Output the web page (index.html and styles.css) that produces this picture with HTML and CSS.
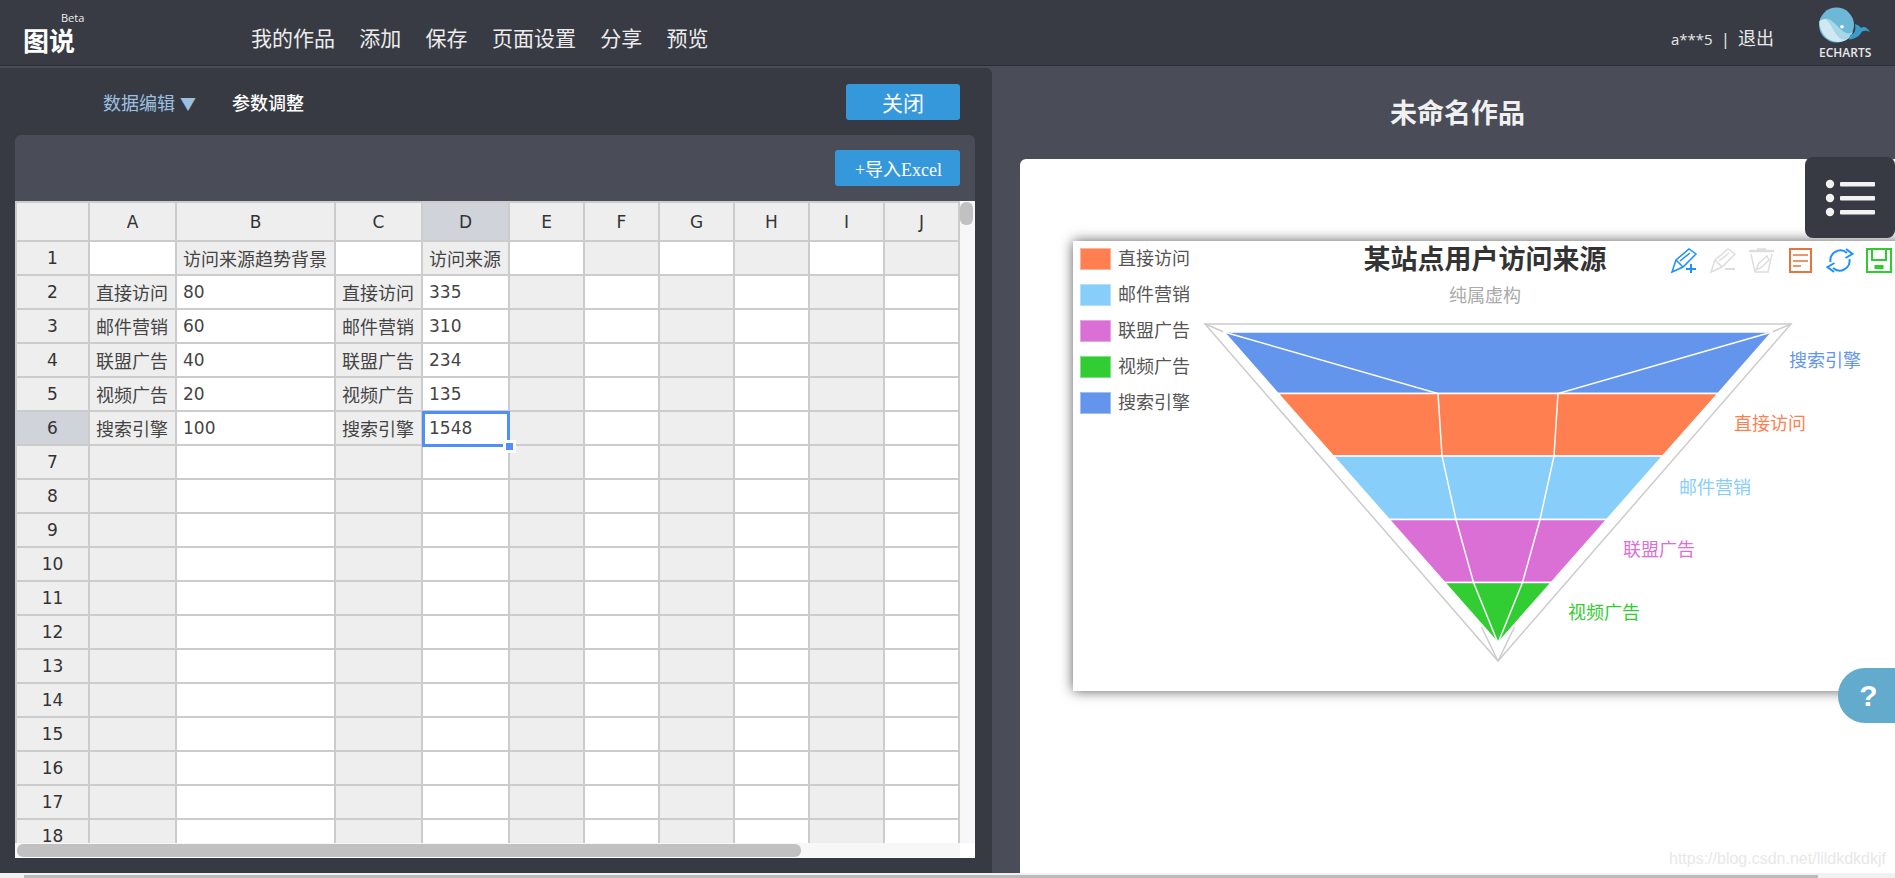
FILE: index.html
```html
<!DOCTYPE html>
<html lang="en">
<head>
    <meta charset="UTF-8">
    <meta name="viewport" content="width=device-width, initial-scale=1.0">
    <title>图说</title>
    <link rel="stylesheet" href="styles.css">
</head>
<body>

<div class="topbar">
    <div class="brand">
        <span class="beta">Beta</span>
        <span class="brand-name">图说</span>
    </div>
    <nav class="nav">
        <a>我的作品</a>
        <a>添加</a>
        <a>保存</a>
        <a>页面设置</a>
        <a>分享</a>
        <a>预览</a>
    </nav>
    <div class="user"><span class="user-name">a***5</span><span class="sep">|</span>退出</div>
    <div class="echarts-logo">
        <svg width="52" height="38" viewBox="0 0 52 38">
            <circle cx="17.5" cy="19" r="17.5" fill="#6cb8d6"/>
            <path d="M0.5 15C5 11 12 13 16 19C20 26 27 31 32 30C27 36 18 38 10 33.5C4 30 0 22 0.5 15Z" fill="#d0e8f1"/>
            <path d="M6 12.5C13 12 19 22 25 26C29 28 32 28 34 25C32 32 27 35 22 33C16 30 13 18 6 12.5Z" fill="#a8d6e6"/>
            <path d="M31 29C36 28 37 24 36 18C40 19 41 21 42 22C45 20 48 21 51 26C47 24 45 25 43 25.500C41 30 36 33 30 33.500Z" fill="#3b9cc8"/>
            <circle cx="23" cy="20.700" r="1.800" fill="#fff"/>
        </svg>
        <span>ECHARTS</span>
    </div>
</div>

<div class="main">
    <div class="editor">
        <div class="editor-tabs">
            <a class="tab tab-active">数据编辑<span class="arrow">▼</span></a>
            <a class="tab tab-plain">参数调整</a>
            <button class="btn btn-close">关闭</button>
        </div>
        <div class="sheet-panel">
            <div class="sheet-head">
                <button class="btn btn-import">+导入Excel</button>
            </div>
            <div class="sheet-body">
                <div class="sheet-view">
                    <table class="sheet">
                        <colgroup>
                            <col class="col-head"><col class="col-a"><col class="col-b"><col class="col-a"><col class="col-a">
                            <col class="col-n"><col class="col-n"><col class="col-n"><col class="col-n"><col class="col-n"><col class="col-n">
                        </colgroup>
                        <thead>
                            <tr><th></th><th>A</th><th>B</th><th>C</th><th class="on">D</th><th>E</th><th>F</th><th>G</th><th>H</th><th>I</th><th>J</th></tr>
                        </thead>
                        <tbody>
                            <tr><th>1</th><td></td><td>访问来源趋势背景</td><td></td><td>访问来源</td><td></td><td></td><td></td><td></td><td></td><td></td></tr>
                            <tr><th>2</th><td>直接访问</td><td class="num">80</td><td>直接访问</td><td class="num">335</td><td></td><td></td><td></td><td></td><td></td><td></td></tr>
                            <tr><th>3</th><td>邮件营销</td><td class="num">60</td><td>邮件营销</td><td class="num">310</td><td></td><td></td><td></td><td></td><td></td><td></td></tr>
                            <tr><th>4</th><td>联盟广告</td><td class="num">40</td><td>联盟广告</td><td class="num">234</td><td></td><td></td><td></td><td></td><td></td><td></td></tr>
                            <tr><th>5</th><td>视频广告</td><td class="num">20</td><td>视频广告</td><td class="num">135</td><td></td><td></td><td></td><td></td><td></td><td></td></tr>
                            <tr><th class="on">6</th><td>搜索引擎</td><td class="num">100</td><td>搜索引擎</td><td class="num sel">1548</td><td></td><td></td><td></td><td></td><td></td><td></td></tr>
                            <tr><th>7</th><td></td><td></td><td></td><td></td><td></td><td></td><td></td><td></td><td></td><td></td></tr>
                            <tr><th>8</th><td></td><td></td><td></td><td></td><td></td><td></td><td></td><td></td><td></td><td></td></tr>
                            <tr><th>9</th><td></td><td></td><td></td><td></td><td></td><td></td><td></td><td></td><td></td><td></td></tr>
                            <tr><th>10</th><td></td><td></td><td></td><td></td><td></td><td></td><td></td><td></td><td></td><td></td></tr>
                            <tr><th>11</th><td></td><td></td><td></td><td></td><td></td><td></td><td></td><td></td><td></td><td></td></tr>
                            <tr><th>12</th><td></td><td></td><td></td><td></td><td></td><td></td><td></td><td></td><td></td><td></td></tr>
                            <tr><th>13</th><td></td><td></td><td></td><td></td><td></td><td></td><td></td><td></td><td></td><td></td></tr>
                            <tr><th>14</th><td></td><td></td><td></td><td></td><td></td><td></td><td></td><td></td><td></td><td></td></tr>
                            <tr><th>15</th><td></td><td></td><td></td><td></td><td></td><td></td><td></td><td></td><td></td><td></td></tr>
                            <tr><th>16</th><td></td><td></td><td></td><td></td><td></td><td></td><td></td><td></td><td></td><td></td></tr>
                            <tr><th>17</th><td></td><td></td><td></td><td></td><td></td><td></td><td></td><td></td><td></td><td></td></tr>
                            <tr><th>18</th><td></td><td></td><td></td><td></td><td></td><td></td><td></td><td></td><td></td><td></td></tr>
                        </tbody>
                    </table>
                    <div class="vscroll"><div class="vthumb"></div></div>
                </div>
                <div class="hscroll-row">
                    <div class="hscroll"><div class="hthumb"></div></div>
                </div>
            </div>
        </div>
    </div>

    <div class="stage">
        <h1 class="stage-title">未命名作品</h1>
        <div class="card">
            <div class="chart">
                <!-- viewBox uses page coordinates so the funnel numbers are easy to check -->
                <svg class="chart-svg" width="852" height="450" viewBox="1073 241 852 450">
                    <!-- legend -->
                    <rect class="sw" x="1080.5" y="248.5" width="30" height="21" fill="#ff7f50" stroke="#ffb39a"/>
                    <rect class="sw" x="1080.5" y="284.5" width="30" height="21" fill="#87cefa" stroke="#b5e0fc"/>
                    <rect class="sw" x="1080.5" y="320.5" width="30" height="21" fill="#da70d6" stroke="#e8a5e5"/>
                    <rect class="sw" x="1080.5" y="356.5" width="30" height="21" fill="#32cd32" stroke="#82e182"/>
                    <rect class="sw" x="1080.5" y="392.5" width="30" height="21" fill="#6495ed" stroke="#a2bff4"/>
                    <text class="legend" x="1118" y="265">直接访问</text>
                    <text class="legend" x="1118" y="301">邮件营销</text>
                    <text class="legend" x="1118" y="337">联盟广告</text>
                    <text class="legend" x="1118" y="373">视频广告</text>
                    <text class="legend" x="1118" y="409">搜索引擎</text>

                    <text class="chart-title" x="1485" y="269">某站点用户访问来源</text>
                    <text class="chart-sub" x="1485" y="302">纯属虚构</text>

                    <!-- gray outer funnel -->
                    <g class="outer">
                        <path d="M1205 324H1791L1498 661Z"/>
                        <path d="M1205 324L1224 332M1791 324L1772 332M1498 661L1481.5 627M1498 661L1514.5 627"/>
                    </g>

                    <!-- funnel -->
                    <g class="bands">
                        <polygon points="1224,332 1772,332 1718,393.5 1278,393.5" fill="#6495ed"/>
                        <polygon points="1278,393.5 1718,393.5 1662.7,456 1333.3,456" fill="#ff7f50"/>
                        <polygon points="1333.3,456 1662.7,456 1606.8,519.5 1389.2,519.5" fill="#87cefa"/>
                        <polygon points="1389.2,519.5 1606.8,519.5 1551.3,582.5 1444.7,582.5" fill="#da70d6"/>
                        <polygon points="1444.7,582.5 1551.3,582.5 1498,643" fill="#32cd32"/>
                    </g>
                    <path class="inner" d="M1224 332L1438 393.5L1442 456L1456 519.5L1473.5 582.5L1498 643L1522.5 582.5L1540 519.5L1554 456L1558 393.5L1772 332"/>

                    <text class="label" x="1789" y="367" fill="#6495ed">搜索引擎</text>
                    <text class="label" x="1734" y="430" fill="#ff7f50">直接访问</text>
                    <text class="label" x="1679" y="494" fill="#87cefa">邮件营销</text>
                    <text class="label" x="1623" y="556" fill="#da70d6">联盟广告</text>
                    <text class="label" x="1568" y="619" fill="#32cd32">视频广告</text>

                    <!-- toolbox -->
                    <g class="tool" stroke="#1e90ff" transform="translate(1671 248)">
                        <path d="M1 24L5 12L18 1L25 6L12 19ZM5 12L12 19M9 13L19 5"/>
                        <path d="M15 21H25M20 16V25" stroke-width="2"/>
                    </g>
                    <g class="tool" stroke="#dddddd" transform="translate(1710 248)">
                        <path d="M1 24L5 12L18 1L25 6L12 19ZM5 12L12 19M9 13L19 5"/>
                        <path d="M15 21H25" stroke-width="2"/>
                    </g>
                    <g class="tool" stroke="#dddddd" transform="translate(1749 248)">
                        <path d="M0 3H25M8 1.5H17" stroke-width="2.5"/>
                        <path d="M2 6L6 24H19L23 6M7 22L10 15L18 8L20 12L13 19Z"/>
                    </g>
                    <g class="tool" stroke="#e2763e" transform="translate(1789 248)">
                        <rect x="1" y="1" width="21" height="23" stroke-width="2"/>
                        <path d="M4 7H19M4 13H19M4 18H12" stroke-width="1.6"/>
                    </g>
                    <g class="tool" stroke="#1e90ff" transform="translate(1827 248)">
                        <path d="M3.5 14A10 10 0 0 1 20 5M19 1L25.5 6L18.5 10" stroke-width="2"/>
                        <path d="M22.5 11A10 10 0 0 1 6 20M7 24L0.5 19L7.5 15" stroke-width="2"/>
                    </g>
                    <g class="tool tool-save" stroke="#2ecc2e" transform="translate(1866 248)">
                        <rect x="1" y="1" width="24" height="23"/>
                        <path d="M6 1V12H20V1M9.5 18H16.5V20H9.5Z"/>
                    </g>
                </svg>
            </div>
        </div>

        <button class="menu-btn">
            <svg width="50" height="38" viewBox="0 0 50 38">
                <g fill="#f2f2f2">
                    <circle cx="5" cy="5" r="4.200"/><rect x="15" y="3" width="35" height="4.500" rx="1"/>
                    <circle cx="5" cy="19" r="4.200"/><rect x="15" y="17" width="35" height="4.500" rx="1"/>
                    <circle cx="5" cy="33" r="4.200"/><rect x="15" y="31" width="35" height="4.500" rx="1"/>
                </g>
            </svg>
        </button>
        <button class="help-btn">?</button>
        <span class="watermark">https://blog.csdn.net/lildkdkdkjf</span>
    </div>
</div>

<div class="page-scroll"><div class="page-thumb"></div></div>

</body>
</html>
```

FILE: styles.css
```css
* {
    box-sizing: border-box;
}
body {
    margin: 0;
    height: 100vh;
    overflow: hidden;
    display: flex;
    flex-direction: column;
    font-family: "Open Sans", "Noto Sans CJK SC", sans-serif;
    background-color: #f1f1f1;
}

/* top bar */
.topbar {
    flex: none;
    height: 66px;
    display: flex;
    align-items: flex-start;
    padding: 0 24px 0 23px;
    background-color: #383b43;
    border-bottom: 1px solid #2c2e34;
}
.brand {
    width: 228px;
    display: flex;
    flex-direction: column;
    padding-top: 11px;
}
.beta {
    align-self: flex-start;
    margin-left: 38px;
    font-size: 11px;
    line-height: 14px;
    color: #eee;
}
.brand-name {
    font-size: 26px;
    line-height: 34px;
    margin-top: -1px;
    font-weight: bold;
    color: #fff;
}
.nav {
    display: flex;
    gap: 24.3px;
    padding-top: 23px;
    font-size: 21px;
    line-height: 30px;
    color: #ececec;
}
.user {
    margin-left: auto;
    padding-top: 25px;
    font-size: 18px;
    line-height: 26px;
    color: #e8e8e8;
}
.user-name {
    font-size: 15px;
}
.sep {
    margin: 0 8px;
    font-size: 17px;
}
.echarts-logo {
    width: 53px;
    margin-left: 44px;
    padding: 6px 0 0 1px;
    display: flex;
    flex-direction: column;
    align-items: flex-start;
    color: #e8e8e8;
    font-size: 12px;
    font-weight: 600;
    line-height: 14px;
}
.echarts-logo svg {
    display: block;
    margin-bottom: 2px;
}

/* two columns */
.main {
    flex: 1;
    min-height: 0;
    display: flex;
    background-color: #4a4c58;
}
.editor {
    flex: none;
    width: 992px;
    margin-top: 2px;
    display: flex;
    flex-direction: column;
    padding: 0 17px 15px 15px;
    background-color: #373a43;
    border-top-right-radius: 6px;
}
.editor-tabs {
    flex: none;
    height: 67px;
    display: flex;
    align-items: center;
    padding: 0 15px 0 88px;
    font-size: 18px;
}
.tab {
    color: #fff;
    margin-right: 36px;
}
.tab-plain {
    font-weight: 500;
}
.tab-active {
    color: #9dc0e0;
}
.arrow {
    margin-left: 5px;
    font-size: 16px;
}
.btn {
    border: none;
    border-radius: 3px;
    background-color: #3498db;
    color: #fff;
    font-family: inherit;
    padding: 0;
    cursor: pointer;
}
.btn-close {
    margin-left: auto;
    width: 114px;
    height: 36px;
    font-size: 21px;
}
.sheet-panel {
    flex: 1;
    min-height: 0;
    display: flex;
    flex-direction: column;
    background-color: #4a4c58;
    border-radius: 6px 6px 0 0;
}
.sheet-head {
    flex: none;
    height: 66px;
    display: flex;
    align-items: center;
    justify-content: flex-end;
    padding-right: 15px;
}
.btn-import {
    width: 125px;
    height: 36px;
    padding-left: 2px;
    font-family: "Liberation Serif", "Noto Sans CJK SC", serif;
    font-size: 18px;
}

/* spreadsheet */
.sheet-body {
    flex: 1;
    min-height: 0;
    display: flex;
    flex-direction: column;
    background-color: #fff;
}
.sheet-view {
    flex: 1;
    min-height: 0;
    display: flex;
    overflow: hidden;
}
.sheet {
    flex: none;
    width: 945px;
    table-layout: fixed;
    border-collapse: separate;
    border-spacing: 0;
    align-self: flex-start;
    font-family: "DejaVu Sans", "Noto Sans CJK SC", sans-serif;
    font-size: 18px;
    color: #444;
}
.col-head { width: 75px; }
.col-a { width: 87px; }
.col-b { width: 159px; }
.col-n { width: 75px; }
.sheet th, .sheet td {
    height: 34px;
    padding: 0;
    border-right: 2px solid #ccc;
    border-bottom: 2px solid #ccc;
    font-weight: normal;
    white-space: nowrap;
}
.sheet th {
    background-color: #eee;
    text-align: center;
    font-size: 17px;
    color: #333;
}
.sheet th:first-child {
    border-left: 2px solid #ccc;
}
.sheet thead th {
    height: 41px;
    border-top: 2px solid #ccc;
}
.sheet th.on {
    background-color: #d0d4da;
}
.sheet td {
    padding-left: 6px;
    background-color: #fff;
    font-family: "Noto Sans CJK SC", sans-serif;
}
.sheet tbody tr:first-child td:nth-child(odd),
.sheet tbody tr:nth-child(n+2) td:nth-child(even) {
    background-color: #eee;
}
.sheet td.num {
    font-family: "DejaVu Sans", sans-serif;
    font-size: 17px;
}
.sheet td.sel {
    position: relative;
}
/* selection frame and its drag handle */
.sel::after {
    content: "";
    position: absolute;
    top: -1px;
    left: -1px;
    right: -2px;
    bottom: -3px;
    border: 3px solid #4f8ff7;
    pointer-events: none;
}
.sel::before {
    content: "";
    position: absolute;
    z-index: 1;
    right: -8px;
    bottom: -9px;
    width: 7px;
    height: 7px;
    background-color: #4f8ff7;
    border: 3px solid #fff;
}
.vscroll {
    flex: 1;
    padding: 1px 0;
    background-color: #f7f7f7;
}
.vthumb {
    width: 13px;
    height: 23px;
    border-radius: 6px;
    background-color: #c1c1c1;
}
.hscroll-row {
    flex: none;
    height: 15px;
    background-color: #fff;
}
.hscroll {
    width: 945px;
    height: 15px;
    padding: 1px 2px;
    background-color: #f7f7f7;
    border-bottom: 1px solid #fff;
}
.hthumb {
    width: 784px;
    height: 13px;
    border-radius: 6px;
    background-color: #c1c1c1;
}

/* chart side */
.stage {
    flex: 1;
    min-width: 0;
    position: relative;
    display: flex;
    flex-direction: column;
}
.stage-title {
    flex: none;
    height: 93px;
    margin: 0;
    padding-left: 28px;
    text-align: center;
    font-size: 27px;
    line-height: 94px;
    font-weight: bold;
    color: #f0f0f0;
}
.card {
    flex: 1;
    min-height: 0;
    margin-left: 28px;
    padding: 82px 0 0 53px;
    background-color: #fff;
    border-top-left-radius: 6px;
    overflow: hidden;
}
.chart {
    width: 852px;
    height: 450px;
    background-color: #fff;
    box-shadow: 0 0 12px rgba(0, 0, 0, 0.65);
}
.chart-svg {
    display: block;
    font-family: "Noto Sans CJK SC", sans-serif;
}
.legend {
    font-size: 18px;
    fill: #555;
}
.chart-title {
    font-size: 27px;
    font-weight: bold;
    fill: #333;
    text-anchor: middle;
}
.chart-sub {
    font-size: 18px;
    fill: #aaa;
    text-anchor: middle;
}
.label {
    font-size: 18px;
}
.outer path {
    fill: none;
    stroke: #ccc;
    stroke-width: 1.5;
}
.bands polygon {
    stroke: #fff;
    stroke-width: 1.5;
}
.inner {
    fill: none;
    stroke: #fff;
    stroke-width: 1.5;
}
.tool {
    fill: none;
    stroke-width: 1.5;
}
.tool-save {
    stroke-width: 2;
}
.menu-btn {
    position: absolute;
    top: 91px;
    right: 0;
    width: 90px;
    height: 81px;
    padding: 0 0 0 20px;
    display: flex;
    align-items: center;
    border: none;
    border-radius: 8px;
    background-color: #373a43;
}
.help-btn {
    position: absolute;
    top: 602px;
    right: 0;
    width: 57px;
    height: 55px;
    padding: 0 0 0 4px;
    border: none;
    border-radius: 27px 0 0 27px;
    background-color: #62abcd;
    color: #fff;
    font-family: "Liberation Sans", sans-serif;
    font-size: 30px;
    font-weight: bold;
}
.watermark {
    position: absolute;
    right: 9px;
    bottom: 5px;
    font-family: "Liberation Sans", sans-serif;
    font-size: 16px;
    color: #e8e8e8;
}

/* page scrollbar */
.page-scroll {
    flex: none;
    height: 5px;
    padding: 2px 0 0 24px;
    background-color: #f1f1f1;
}
.page-thumb {
    width: 1794px;
    height: 3px;
    background-color: #bbb;
}
```
